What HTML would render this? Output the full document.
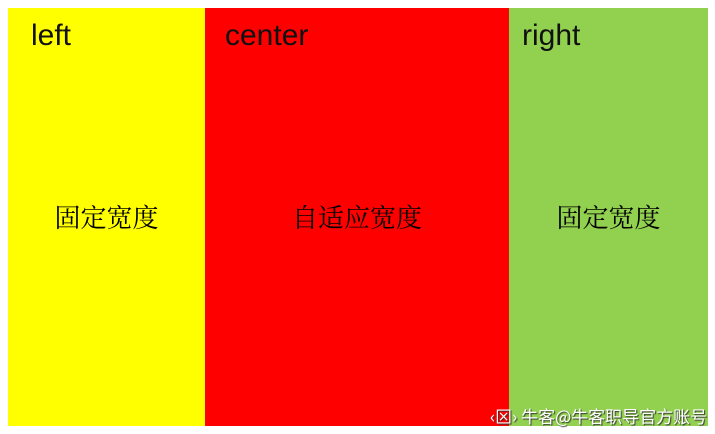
<!DOCTYPE html>
<html><head><meta charset="utf-8"><style>
body{margin:0;width:715px;height:434px;background:#fff;position:relative;overflow:hidden;font-family:"Liberation Sans","Noto Sans CJK SC",sans-serif}
.c{position:absolute;top:8px;height:418px}
.l{position:absolute;top:11px;font-size:30px;color:#111}
.m{position:absolute;top:190px;width:100%;text-align:center;font-size:26px;font-family:"Noto Serif CJK SC",serif;color:#000}
.wm{position:absolute;left:490px;top:403px;font-size:17px;color:#fff;text-shadow:1px 1px 1px #333;font-family:"Noto Sans CJK SC",sans-serif;white-space:nowrap}
</style></head><body>
<div class="c" style="left:8px;width:197px;background:#ff0"><span class="l" style="left:23px">left</span><div class="m">固定宽度</div></div>
<div class="c" style="left:205px;width:304px;background:#f00"><span class="l" style="left:20px">center</span><div class="m">自适应宽度</div></div>
<div class="c" style="left:509px;width:199px;background:#92d050"><span class="l" style="left:13px">right</span><div class="m">固定宽度</div></div>
<div class="wm">‹⊠› 牛客@牛客职导官方账号</div>
</body></html>
